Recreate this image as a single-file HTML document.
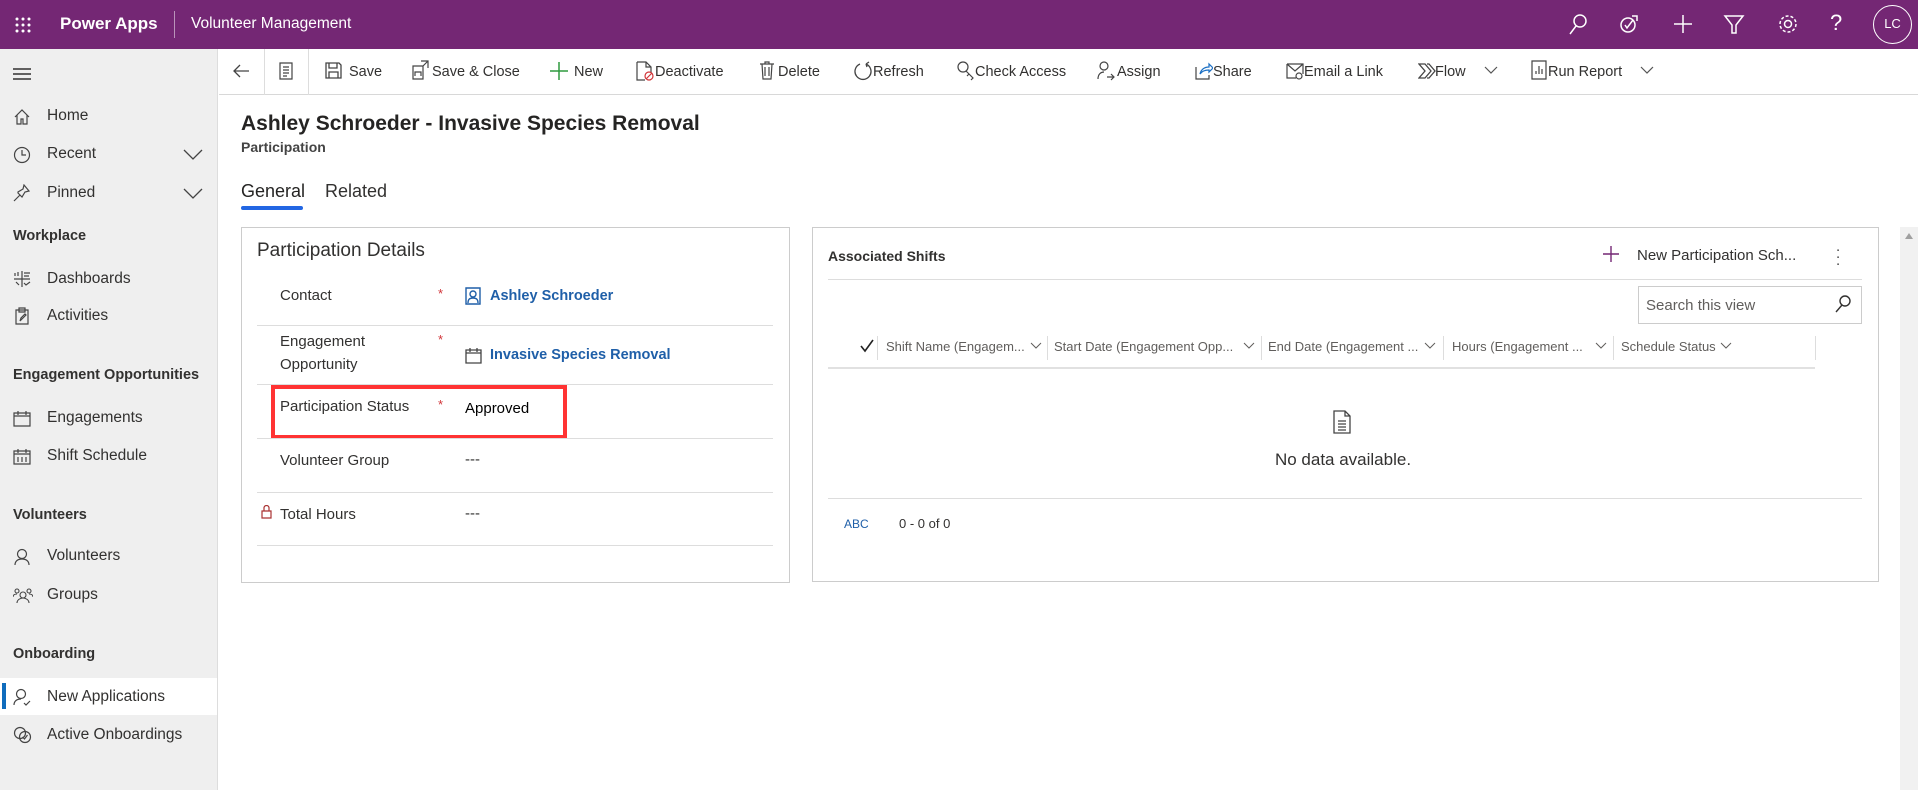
<!DOCTYPE html>
<html><head><meta charset="utf-8"><style>
*{margin:0;padding:0;box-sizing:border-box}
body{width:1918px;height:790px;overflow:hidden;background:#fff;font-family:"Liberation Sans",sans-serif;color:#323130;position:relative}
.a{position:absolute;white-space:nowrap}
#hdr{position:absolute;left:0;top:0;width:1918px;height:49px;background:#742774;color:#fff}
#side{position:absolute;left:0;top:49px;width:218px;height:741px;background:#efefef;border-right:1px solid #ddd}
.nav{position:absolute;left:47px;font-size:15.5px;color:#323130;white-space:nowrap}
.grp{position:absolute;left:13px;font-size:14.5px;font-weight:bold;color:#323130;white-space:nowrap}
.ic{position:absolute;left:13px}
#cmd{position:absolute;left:219px;top:49px;right:0;height:46px;border-bottom:1px solid #d8d8d8}
.ct{position:absolute;top:15px;font-size:14.5px;color:#323130;white-space:nowrap}
.card{position:absolute;border:1px solid #ccc;background:#fff}
.lbl{position:absolute;left:280px;font-size:15px;color:#323130;white-space:nowrap}
.star{position:absolute;left:438px;color:#d13438;font-size:13px}
.hr{position:absolute;height:1px;background:#ddd}
.col{position:absolute;top:339px;font-size:13px;color:#605e5c;white-space:nowrap}
.sep{position:absolute;top:336px;width:1px;height:24px;background:#ddd}
svg{position:absolute}
</style></head><body>
<div id="hdr">
 <svg style="left:15px;top:17px" width="16" height="16" viewBox="0 0 16 16" fill="#fff"><circle cx="2" cy="2" r="1.5"/><circle cx="8" cy="2" r="1.5"/><circle cx="14" cy="2" r="1.5"/><circle cx="2" cy="8" r="1.5"/><circle cx="8" cy="8" r="1.5"/><circle cx="14" cy="8" r="1.5"/><circle cx="2" cy="14" r="1.5"/><circle cx="8" cy="14" r="1.5"/><circle cx="14" cy="14" r="1.5"/></svg>
 <div class="a" style="left:60px;top:14px;font-size:17px;font-weight:bold">Power Apps</div>
 <div class="a" style="left:174px;top:11px;width:1px;height:27px;background:rgba(255,255,255,.5)"></div>
 <div class="a" style="left:191px;top:15px;font-size:15.5px">Volunteer Management</div>
 <svg style="left:1566px;top:12px" width="24" height="24" viewBox="0 0 24 24" fill="none" stroke="#fff" stroke-width="1.5"><circle cx="14" cy="9" r="6"/><path d="M10 14l-6 8"/></svg>
 <svg style="left:1617px;top:12px" width="24" height="24" viewBox="0 0 24 24" fill="none" stroke="#fff" stroke-width="1.5"><circle cx="11" cy="13" r="7"/><path d="M8 13l2 3 6-8M15 4h5v5"/></svg>
 <svg style="left:1671px;top:12px" width="24" height="24" viewBox="0 0 24 24" fill="none" stroke="#fff" stroke-width="1.5"><path d="M12 3v18M3 12h18"/></svg>
 <svg style="left:1722px;top:12px" width="24" height="24" viewBox="0 0 24 24" fill="none" stroke="#fff" stroke-width="1.5"><path d="M3 4h18l-7 9v8h-4v-8z"/></svg>
 <svg style="left:1776px;top:12px" width="24" height="24" viewBox="0 0 24 24" fill="none" stroke="#fff" stroke-width="1.5"><circle cx="12" cy="12" r="3.5"/><circle cx="12" cy="12" r="8" stroke-dasharray="3 2"/></svg>
 <div class="a" style="left:1830px;top:10px;font-size:22px">?</div>
 <div class="a" style="left:1873px;top:5px;width:39px;height:39px;border:1.5px solid #fff;border-radius:50%;font-size:13px;text-align:center;line-height:36px">LC</div>
</div>

<div id="side">
 <svg style="left:13px;top:18px" width="18" height="14" viewBox="0 0 18 14" stroke="#323130" stroke-width="1.5"><path d="M0 2h18M0 7h18M0 12h18"/></svg>
 <svg class="ic" style="top:59px" width="18" height="18" viewBox="0 0 18 18" fill="none" stroke="#444" stroke-width="1.2"><path d="M2 9l7-7 7 7M4 7v9h4v-5h2v5h4V7"/></svg><div class="nav" style="top:58px">Home</div>
 <svg class="ic" style="top:97px" width="18" height="18" viewBox="0 0 18 18" fill="none" stroke="#444" stroke-width="1.2"><circle cx="9" cy="9" r="7.5"/><path d="M9 4v5h4"/></svg><div class="nav" style="top:96px">Recent</div>
 <svg style="left:183px;top:100px" width="20" height="12" viewBox="0 0 20 12" fill="none" stroke="#444" stroke-width="1.3"><path d="M1 1l9 9 9-9"/></svg>
 <svg class="ic" style="top:135px" width="18" height="18" viewBox="0 0 18 18" fill="none" stroke="#444" stroke-width="1.2"><path d="M1 17l6-6M5 9l4 4 3-5 4-1-5-6-1 4-5 3z"/></svg><div class="nav" style="top:135px">Pinned</div>
 <svg style="left:183px;top:139px" width="20" height="12" viewBox="0 0 20 12" fill="none" stroke="#444" stroke-width="1.3"><path d="M1 1l9 9 9-9"/></svg>
 <div class="grp" style="top:179px">Workplace</div>
 <svg class="ic" style="top:221px" width="18" height="18" viewBox="0 0 18 18" fill="none" stroke="#444" stroke-width="1.2"><path d="M9 1v16M1 9h16M2 6V3M5 6V2M11 3h6M11 6h5M3 12l3 3M11 13l2 2 4-3"/></svg><div class="nav" style="top:221px">Dashboards</div>
 <svg class="ic" style="top:258px" width="18" height="18" viewBox="0 0 18 18" fill="none" stroke="#444" stroke-width="1.2"><path d="M3 3h12v14H3zM6 1h6v4H6zM7 14l1-3 4-4 1 1-4 4z"/></svg><div class="nav" style="top:258px">Activities</div>
 <div class="grp" style="top:318px">Engagement Opportunities</div>
 <svg class="ic" style="top:361px" width="18" height="18" viewBox="0 0 18 18" fill="none" stroke="#444" stroke-width="1.2"><path d="M1 3h16v13H1zM1 6h16M5 1v4M13 1v4"/></svg><div class="nav" style="top:360px">Engagements</div>
 <svg class="ic" style="top:399px" width="18" height="18" viewBox="0 0 18 18" fill="none" stroke="#444" stroke-width="1.2"><path d="M1 3h16v13H1zM1 6h16M5 1v4M13 1v4M5 9v5M9 9v5M13 9v5"/></svg><div class="nav" style="top:398px">Shift Schedule</div>
 <div class="grp" style="top:458px">Volunteers</div>
 <svg class="ic" style="top:499px" width="18" height="18" viewBox="0 0 18 18" fill="none" stroke="#444" stroke-width="1.2"><circle cx="9" cy="6" r="4.5"/><path d="M2 17c0-4 3-6 7-6s7 2 7 6"/></svg><div class="nav" style="top:498px">Volunteers</div>
 <svg class="ic" style="top:538px" width="20" height="18" viewBox="0 0 20 18" fill="none" stroke="#444" stroke-width="1.1"><circle cx="4" cy="4" r="2"/><circle cx="16" cy="4" r="2"/><circle cx="10" cy="8" r="3"/><path d="M0 10c0-2 2-3 4-3M20 10c0-2-2-3-4-3M4 16c0-3 3-5 6-5s6 2 6 5"/></svg><div class="nav" style="top:537px">Groups</div>
 <div class="grp" style="top:597px">Onboarding</div>
 <div class="a" style="left:0;top:629px;width:217px;height:37px;background:#fff"></div>
 <div class="a" style="left:2px;top:634px;width:4px;height:26px;background:#0f6cbd"></div>
 <svg class="ic" style="top:639px" width="18" height="18" viewBox="0 0 18 18" fill="none" stroke="#444" stroke-width="1.2"><circle cx="8" cy="6" r="4.5"/><path d="M1 17c0-4 3-6 7-6M11 15l2 2 4-4"/></svg><div class="nav" style="top:639px">New Applications</div>
 <svg class="ic" style="top:677px" width="20" height="18" viewBox="0 0 20 18" fill="none" stroke="#444" stroke-width="1.2"><circle cx="7" cy="7" r="5.5"/><circle cx="12" cy="11" r="5.5"/><path d="M9.5 11l2 2 3-4"/></svg><div class="nav" style="top:677px">Active Onboardings</div>
</div>

<div id="cmd">
 <svg style="left:13px;top:14px" width="18" height="16" viewBox="0 0 18 16" fill="none" stroke="#444" stroke-width="1.3"><path d="M17 8H2M8 2L2 8l6 6"/></svg>
 <div class="a" style="left:45px;top:0;width:1px;height:46px;background:#ddd"></div>
 <svg style="left:60px;top:13px" width="14" height="18" viewBox="0 0 14 18" fill="none" stroke="#444" stroke-width="1.2"><path d="M1 1h12v16H1zM4 5h6M4 8h6M4 11h6M4 14h4"/></svg>
 <div class="a" style="left:89px;top:0;width:1px;height:46px;background:#ddd"></div>
 <svg style="left:106px;top:13px" width="17" height="17" viewBox="0 0 17 17" fill="none" stroke="#444" stroke-width="1.3"><path d="M1 1h13l2 2v13H1zM4 1v5h8V1M4 16v-6h9v6"/></svg><div class="ct" style="left:130px">Save</div>
 <svg style="left:193px;top:11px" width="18" height="20" viewBox="0 0 18 20" fill="none" stroke="#444" stroke-width="1.2"><path d="M1 6h10v13H1zM3 16v-4h6v4M9 1h7v7M16 1l-5 5" /></svg><div class="ct" style="left:213px">Save &amp; Close</div>
 <svg style="left:331px;top:13px" width="18" height="18" viewBox="0 0 18 18" stroke="#2e9a3f" stroke-width="1.5"><path d="M9 0v18M0 9h18"/></svg><div class="ct" style="left:355px">New</div>
 <svg style="left:417px;top:12px" width="18" height="20" viewBox="0 0 18 20" fill="none" stroke="#444" stroke-width="1.2"><path d="M1 1h9l5 5v6M10 1v5h5M1 1v18h8"/><circle cx="13" cy="15" r="4" stroke="#d13438"/><path d="M10 18l6-6" stroke="#d13438"/></svg><div class="ct" style="left:436px">Deactivate</div>
 <svg style="left:541px;top:12px" width="14" height="19" viewBox="0 0 14 19" fill="none" stroke="#444" stroke-width="1.2"><path d="M0 3h14M5 3V1h4v2M2 3l1 15h8l1-15M5 6v9M9 6v9"/></svg><div class="ct" style="left:559px">Delete</div>
 <svg style="left:635px;top:12px" width="18" height="20" viewBox="0 0 18 20" fill="none" stroke="#444" stroke-width="1.3"><path d="M6 3a8 8 0 1 0 6 0M12 3l3-2M12 3l1 3"/></svg><div class="ct" style="left:654px">Refresh</div>
 <svg style="left:738px;top:12px" width="18" height="20" viewBox="0 0 18 20" fill="none" stroke="#444" stroke-width="1.2"><circle cx="6" cy="6" r="5"/><path d="M9 10l7 7-2 2M12 13l-2 2"/></svg><div class="ct" style="left:756px">Check Access</div>
 <svg style="left:878px;top:12px" width="18" height="20" viewBox="0 0 18 20" fill="none" stroke="#444" stroke-width="1.2"><circle cx="7" cy="5" r="4"/><path d="M1 18c0-5 3-7 6-7M10 16h7M14 13l3 3-3 3" /></svg><div class="ct" style="left:898px">Assign</div>
 <svg style="left:976px;top:12px" width="18" height="19" viewBox="0 0 18 19" fill="none" stroke="#444" stroke-width="1.2"><path d="M1 6v12h13v-4"/><path d="M5 13c1-5 5-7 9-7V3l4 4-4 4V9c-4 0-7 1-9 4z" stroke="#1a6fc4"/></svg><div class="ct" style="left:994px">Share</div>
 <svg style="left:1067px;top:13px" width="18" height="18" viewBox="0 0 18 18" fill="none" stroke="#444" stroke-width="1.2"><path d="M1 2h16v10M1 2v14h9M1 2l8 7 8-7"/><circle cx="13" cy="14" r="3"/></svg><div class="ct" style="left:1085px">Email a Link</div>
 <svg style="left:1199px;top:13px" width="18" height="18" viewBox="0 0 18 18" fill="none" stroke="#444" stroke-width="1.3"><path d="M1 2h6l6 7-6 7H1l6-7zM9 2h2l6 7-6 7H9"/></svg><div class="ct" style="left:1216px">Flow</div>
 <svg style="left:1265px;top:17px" width="14" height="9" viewBox="0 0 14 9" fill="none" stroke="#555" stroke-width="1.2"><path d="M1 1l6 6 6-6"/></svg>
 <svg style="left:1312px;top:11px" width="16" height="20" viewBox="0 0 16 20" fill="none" stroke="#444" stroke-width="1.2"><path d="M1 1h14v18H1zM5 14v-3M8 14V6M11 14V9"/></svg><div class="ct" style="left:1329px">Run Report</div>
 <svg style="left:1421px;top:17px" width="14" height="9" viewBox="0 0 14 9" fill="none" stroke="#555" stroke-width="1.2"><path d="M1 1l6 6 6-6"/></svg>
</div>

<div class="a" style="left:241px;top:112px;font-size:21px;font-weight:bold;color:#252423">Ashley Schroeder - Invasive Species Removal</div>
<div class="a" style="left:241px;top:139px;font-size:14px;font-weight:bold;color:#444">Participation</div>
<div class="a" style="left:241px;top:181px;font-size:18px;color:#252423">General</div>
<div class="a" style="left:241px;top:206px;width:62px;height:4px;border-radius:2px;background:#2266e3"></div>
<div class="a" style="left:325px;top:181px;font-size:18px;color:#323130">Related</div>

<div class="card" style="left:241px;top:227px;width:549px;height:356px"></div>
<div class="a" style="left:257px;top:240px;font-size:19px;color:#323130">Participation Details</div>
<div class="lbl" style="top:287px">Contact</div><div class="star" style="top:286px">*</div>
<svg style="left:465px;top:287px" width="16" height="18" viewBox="0 0 16 18" fill="none" stroke="#1f5fa8" stroke-width="1.4"><path d="M1 1h14v16H1z"/><circle cx="8" cy="7" r="3"/><path d="M3 16c0-4 2-5 5-5s5 1 5 5"/></svg>
<div class="a" style="left:490px;top:288px;font-size:14.5px;font-weight:bold;color:#1f5fa8">Ashley Schroeder</div>
<div class="hr" style="left:257px;top:325px;width:516px"></div>
<div class="lbl" style="top:333px">Engagement</div><div class="lbl" style="top:356px">Opportunity</div><div class="star" style="top:332px">*</div>
<svg style="left:465px;top:347px" width="17" height="17" viewBox="0 0 17 17" fill="none" stroke="#444" stroke-width="1.3"><path d="M1 3h15v13H1zM1 6h15M5 1v4M12 1v4"/></svg>
<div class="a" style="left:490px;top:347px;font-size:14.5px;font-weight:bold;color:#1f5fa8">Invasive Species Removal</div>
<div class="hr" style="left:257px;top:384px;width:516px"></div>
<div class="lbl" style="top:398px">Participation Status</div><div class="star" style="top:397px">*</div>
<div class="a" style="left:465px;top:400px;font-size:15px;color:#000">Approved</div>
<div class="a" style="left:271px;top:385px;width:296px;height:54px;border:4px solid #f33"></div>
<div class="hr" style="left:257px;top:438px;width:516px"></div>
<div class="lbl" style="top:452px">Volunteer Group</div>
<div class="a" style="left:465px;top:451px;font-size:15px;color:#323130">---</div>
<div class="hr" style="left:257px;top:492px;width:516px"></div>
<svg style="left:261px;top:505px" width="11" height="14" viewBox="0 0 11 14" fill="none" stroke="#a33" stroke-width="1.2"><path d="M1 6h9v7H1zM3 6V3a2.5 2.5 0 0 1 5 0v3"/></svg>
<div class="lbl" style="top:506px">Total Hours</div>
<div class="a" style="left:465px;top:505px;font-size:15px;color:#323130">---</div>
<div class="hr" style="left:257px;top:545px;width:516px"></div>

<div class="card" style="left:812px;top:227px;width:1067px;height:355px"></div>
<div class="a" style="left:828px;top:248px;font-size:14px;font-weight:bold;color:#323130">Associated Shifts</div>
<svg style="left:1603px;top:246px" width="16" height="16" viewBox="0 0 16 16" stroke="#742774" stroke-width="1.4"><path d="M8 0v16M0 8h16"/></svg>
<div class="a" style="left:1637px;top:247px;font-size:15px;color:#323130">New Participation Sch...</div>
<div class="a" style="left:1836px;top:243px;font-size:15px;color:#444;line-height:7px">.<br>.<br>.</div>
<div class="hr" style="left:828px;top:279px;width:1034px"></div>
<div class="a" style="left:1638px;top:286px;width:224px;height:38px;border:1px solid #ccc"></div>
<div class="a" style="left:1646px;top:297px;font-size:15px;color:#605e5c">Search this view</div>
<svg style="left:1835px;top:295px" width="16" height="18" viewBox="0 0 16 18" fill="none" stroke="#323130" stroke-width="1.4"><circle cx="10" cy="6" r="5"/><path d="M7 10l-6 7"/></svg>
<svg style="left:860px;top:339px" width="14" height="14" viewBox="0 0 14 14" fill="none" stroke="#222" stroke-width="1.6"><path d="M1 7l4 5 8-11"/></svg>
<div class="sep" style="left:877px"></div><div class="col" style="left:886px">Shift Name (Engagem...</div>
<svg style="left:1030px;top:342px" width="12" height="8" viewBox="0 0 12 8" fill="none" stroke="#605e5c"><path d="M1 1l5 5 5-5"/></svg>
<div class="sep" style="left:1047px"></div><div class="col" style="left:1054px">Start Date (Engagement Opp...</div>
<svg style="left:1243px;top:342px" width="12" height="8" viewBox="0 0 12 8" fill="none" stroke="#605e5c"><path d="M1 1l5 5 5-5"/></svg>
<div class="sep" style="left:1261px"></div><div class="col" style="left:1268px">End Date (Engagement ...</div>
<svg style="left:1424px;top:342px" width="12" height="8" viewBox="0 0 12 8" fill="none" stroke="#605e5c"><path d="M1 1l5 5 5-5"/></svg>
<div class="sep" style="left:1443px"></div><div class="col" style="left:1452px">Hours (Engagement ...</div>
<svg style="left:1595px;top:342px" width="12" height="8" viewBox="0 0 12 8" fill="none" stroke="#605e5c"><path d="M1 1l5 5 5-5"/></svg>
<div class="sep" style="left:1613px"></div><div class="col" style="left:1621px">Schedule Status</div>
<svg style="left:1720px;top:342px" width="12" height="8" viewBox="0 0 12 8" fill="none" stroke="#605e5c"><path d="M1 1l5 5 5-5"/></svg>
<div class="sep" style="left:1815px"></div>
<div class="a" style="left:828px;top:367px;width:987px;height:2px;background:#e1e1e1"></div>
<svg style="left:1333px;top:410px" width="18" height="24" viewBox="0 0 18 24" fill="none" stroke="#444" stroke-width="1.3"><path d="M1 1h11l5 5v17H1zM12 1v5h5M5 11h8M5 14h8M5 17h8M5 20h8"/></svg>
<div class="a" style="left:1343px;top:450px;transform:translateX(-50%);font-size:17px;color:#323130">No data available.</div>
<div class="hr" style="left:828px;top:498px;width:1034px"></div>
<div class="a" style="left:844px;top:517px;font-size:12px;color:#1f5fa8">ABC</div>
<div class="a" style="left:899px;top:516px;font-size:13px;color:#323130">0 - 0 of 0</div>

<div class="a" style="left:1900px;top:227px;width:18px;height:563px;background:#f1f1f1"></div>
<svg style="left:1905px;top:233px" width="8" height="6" viewBox="0 0 8 6" fill="#a0a0a0"><path d="M4 0l4 6H0z"/></svg>
</body></html>
